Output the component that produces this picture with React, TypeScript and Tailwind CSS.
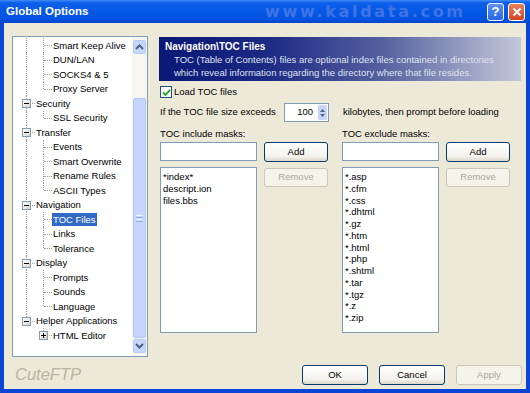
import React from 'react';

type Line = 'pass' | 'tee' | 'end' | 'none';

interface TreeRow {
  label: string;
  cols: Line[];
  box?: '-' | '+';
  selected?: boolean;
}

const tree: TreeRow[] = [
  { label: 'Smart Keep Alive', cols: ['pass', 'tee'] },
  { label: 'DUN/LAN', cols: ['pass', 'tee'] },
  { label: 'SOCKS4 & 5', cols: ['pass', 'tee'] },
  { label: 'Proxy Server', cols: ['pass', 'end'] },
  { label: 'Security', cols: ['tee'], box: '-' },
  { label: 'SSL Security', cols: ['pass', 'end'] },
  { label: 'Transfer', cols: ['tee'], box: '-' },
  { label: 'Events', cols: ['pass', 'tee'] },
  { label: 'Smart Overwrite', cols: ['pass', 'tee'] },
  { label: 'Rename Rules', cols: ['pass', 'tee'] },
  { label: 'ASCII Types', cols: ['pass', 'end'] },
  { label: 'Navigation', cols: ['tee'], box: '-' },
  { label: 'TOC Files', cols: ['pass', 'tee'], selected: true },
  { label: 'Links', cols: ['pass', 'tee'] },
  { label: 'Tolerance', cols: ['pass', 'end'] },
  { label: 'Display', cols: ['tee'], box: '-' },
  { label: 'Prompts', cols: ['pass', 'tee'] },
  { label: 'Sounds', cols: ['pass', 'tee'] },
  { label: 'Language', cols: ['pass', 'end'] },
  { label: 'Helper Applications', cols: ['end'], box: '-' },
  { label: 'HTML Editor', cols: ['none', 'end'], box: '+' },
];

const includeMasks = ['*index*', 'descript.ion', 'files.bbs'];
const excludeMasks = [
  '*.asp', '*.cfm', '*.css', '*.dhtml', '*.gz', '*.htm', '*.html',
  '*.php', '*.shtml', '*.tar', '*.tgz', '*.z', '*.zip',
];

function TreeCell({ kind, box }: { kind: Line; box?: '-' | '+' }) {
  return (
    <div className="relative h-full w-[17px] shrink-0">
      {kind !== 'none' && (
        <span
          className={`absolute left-[8px] top-0 w-0 border-l border-dotted border-[#a0a0a0] ${
            kind === 'end' ? 'h-1/2' : 'h-full'
          }`}
        />
      )}
      {(kind === 'tee' || kind === 'end') && (
        <span className="absolute left-[9px] right-0 top-1/2 h-0 border-t border-dotted border-[#a0a0a0]" />
      )}
      {box && (
        <span className="absolute left-[4px] top-[3px] flex h-[9px] w-[9px] items-center justify-center border border-[#7f9db9] bg-[linear-gradient(135deg,#ffffff,#d8d5c8)]">
          <svg width="7" height="7" viewBox="0 0 7 7">
            <path d="M1 3.5h5" stroke="#000" strokeWidth="1" />
            {box === '+' && <path d="M3.5 1v5" stroke="#000" strokeWidth="1" />}
          </svg>
        </span>
      )}
    </div>
  );
}

function Chevron({ up }: { up?: boolean }) {
  return (
    <svg width="9" height="6" viewBox="0 0 9 6">
      <path
        d={up ? 'M1 5L4.5 1.5L8 5' : 'M1 1L4.5 4.5L8 1'}
        stroke="#4d6185"
        strokeWidth="2"
        fill="none"
      />
    </svg>
  );
}

function ScrollBar() {
  return (
    <div className="flex w-[15px] shrink-0 flex-col items-center bg-[#f6f5f0]">
      <div className="mt-[3px] flex h-[14px] w-[13px] items-center justify-center rounded-[2px] border border-[#b8cbf4] bg-[#c7d6fb]">
        <Chevron up />
      </div>
      <div className="h-[44px]" />
      <div className="flex h-[240px] w-[13px] flex-col items-center justify-center gap-[1px] rounded-[2px] border border-[#b1c6f5] bg-[#c6d5fb]">
        <span className="h-[1px] w-[7px] bg-[#eef4fe]" />
        <span className="h-[1px] w-[7px] bg-[#8cb0f8]" />
        <span className="h-[1px] w-[7px] bg-[#eef4fe]" />
        <span className="h-[1px] w-[7px] bg-[#8cb0f8]" />
      </div>
      <div className="mt-[1px] flex h-[14px] w-[13px] items-center justify-center rounded-[2px] border border-[#b8cbf4] bg-[#c7d6fb]">
        <Chevron />
      </div>
    </div>
  );
}

function OptionTree() {
  return (
    <div className="flex h-[321px] w-[136px] shrink-0 border border-[#7f9db9] bg-white">
      <div className="flex-1 overflow-hidden pl-[5px] pt-[1px]">
        {tree.map((row) => (
          <div key={row.label} className="flex h-[14.5px] items-center whitespace-nowrap">
            {row.cols.map((c, i) => (
              <TreeCell key={i} kind={c} box={i === row.cols.length - 1 ? row.box : undefined} />
            ))}
            <span
              className={`px-[1px] leading-[13px] ${
                row.selected ? 'bg-[#316ac5] text-white' : 'text-black'
              }`}
            >
              {row.label}
            </span>
          </div>
        ))}
      </div>
      <ScrollBar />
    </div>
  );
}

function XpButton({
  children,
  disabled,
  className = '',
}: {
  children: React.ReactNode;
  disabled?: boolean;
  className?: string;
}) {
  return (
    <div
      className={`flex shrink-0 items-center justify-center rounded-[3px] border ${
        disabled
          ? 'border-[#c9c7ba] bg-[#f5f4ea] text-[#aca899]'
          : 'border-[#003c74] bg-[linear-gradient(to_bottom,#ffffff,#f3f2ec_75%,#dcd7cb)] text-black'
      } ${className}`}
    >
      {children}
    </div>
  );
}

function MaskColumn({ title, items }: { title: string; items: string[] }) {
  return (
    <div className="flex w-[168px] flex-col">
      <div className="h-[12px] leading-[12px]">{title}</div>
      <div className="mt-[2px] flex h-[19px] gap-[7px]">
        <div className="h-full w-[97px] border border-[#7f9db9] bg-white" />
        <XpButton className="h-[20px] w-[64px]">Add</XpButton>
      </div>
      <div className="mt-[6px] flex gap-[7px]">
        <div className="h-[166px] w-[97px] border border-[#7f9db9] bg-white px-[2px] pt-[3px]">
          {items.map((m) => (
            <div key={m} className="h-[11.75px] leading-[11.75px]">
              {m}
            </div>
          ))}
        </div>
        <XpButton disabled className="mt-[1px] h-[19px] w-[64px]">
          Remove
        </XpButton>
      </div>
    </div>
  );
}

function TocPanel() {
  return (
    <div className="mt-[1px] flex w-[362px] flex-col">
      <div className="h-[44px] bg-[linear-gradient(to_right,#0a1876,#1c2a84_30%,#56619f_62%,#c3c7da)] pl-[6px] pt-[4px]">
        <div className="text-[10px] font-bold leading-[12px] text-white">Navigation\TOC Files</div>
        <div className="mt-[1px] pl-[9px] leading-[12.5px] text-[#dfe2ee]">
          <div>TOC (Table of Contents) files are optional index files contained in directories</div>
          <div>which reveal information regarding the directory where that file resides.</div>
        </div>
      </div>

      <div className="mt-[5px] flex h-[12px] items-center gap-[2px] pl-[1px]">
        <div className="flex h-[12px] w-[12px] items-center justify-center border border-[#1c5180] bg-white">
          <svg width="9" height="9" viewBox="0 0 9 9">
            <path d="M1 4.5L3.5 7L8 1.8" stroke="#21a121" strokeWidth="1.8" fill="none" />
          </svg>
        </div>
        <span>Load TOC files</span>
      </div>

      <div className="mt-[5px] flex h-[19px] items-center pl-[1px]">
        <span className="w-[124px]">If the TOC file size exceeds</span>
        <div className="flex h-[19px] w-[45px] items-center border border-[#7f9db9] bg-white">
          <span className="w-[28px] text-right">100</span>
          <div className="ml-[5px] flex h-[15px] w-[9px] flex-col items-center justify-center gap-[2px] rounded-[2px] bg-[#c6d5fa]">
            <svg width="5" height="3" viewBox="0 0 5 3">
              <path d="M0 3L2.5 0L5 3Z" fill="#4d6185" />
            </svg>
            <svg width="5" height="3" viewBox="0 0 5 3">
              <path d="M0 0L2.5 3L5 0Z" fill="#4d6185" />
            </svg>
          </div>
        </div>
        <span className="ml-[14px]">kilobytes, then prompt before loading</span>
      </div>

      <div className="mt-[6px] flex gap-[14px] pl-[1px]">
        <MaskColumn title="TOC include masks:" items={includeMasks} />
        <MaskColumn title="TOC exclude masks:" items={excludeMasks} />
      </div>
    </div>
  );
}

export default function App() {
  return (
    <div className="flex h-[393px] w-[530px] flex-col overflow-hidden font-['Liberation_Sans',Arial,sans-serif] text-[9.5px] text-black">
      <div className="flex h-[23px] shrink-0 items-center bg-[linear-gradient(to_bottom,#3f8cf6_0%,#0d5fe9_12%,#0558e6_50%,#0152df_85%,#0043c8_100%)] pl-[6px] pr-[5px]">
        <span className="w-[259px] text-[11.5px] font-bold text-white">Global Options</span>
        <span className="font-['DejaVu_Sans',sans-serif] text-[16px] font-bold leading-none tracking-[2.7px] text-[#3f74e6]">
          www.kaldata.com
        </span>
        <div className="ml-auto flex gap-[4px]">
          <div className="flex h-[18px] w-[17px] items-center justify-center rounded-[3px] border border-white bg-[linear-gradient(to_bottom,#5d93f6,#2a66e6)] text-[13px] font-bold leading-none text-white">
            ?
          </div>
          <div className="flex h-[18px] w-[17px] items-center justify-center rounded-[3px] border border-white bg-[linear-gradient(to_bottom,#e9805f,#d24520)]">
            <svg width="10" height="10" viewBox="0 0 10 10">
              <path d="M1.5 1.5L8.5 8.5M8.5 1.5L1.5 8.5" stroke="#fff" strokeWidth="2" />
            </svg>
          </div>
        </div>
      </div>

      <div className="flex flex-1 flex-col border-x-4 border-b-4 border-[#0a45d8] bg-[#ece9d8]">
        <div className="flex gap-[11px] pl-[8px] pt-[13px]">
          <OptionTree />
          <TocPanel />
        </div>
        <div className="mt-[7px] flex items-center pl-[11px] pr-[4px]">
          <span className="-mt-[2px] text-[16.5px] italic text-[#b9b4a4]">CuteFTP</span>
          <div className="ml-auto flex gap-[11px]">
            <XpButton className="h-[20px] w-[66px]">OK</XpButton>
            <XpButton className="h-[20px] w-[66px]">Cancel</XpButton>
            <XpButton disabled className="h-[20px] w-[66px]">
              Apply
            </XpButton>
          </div>
        </div>
      </div>
    </div>
  );
}
